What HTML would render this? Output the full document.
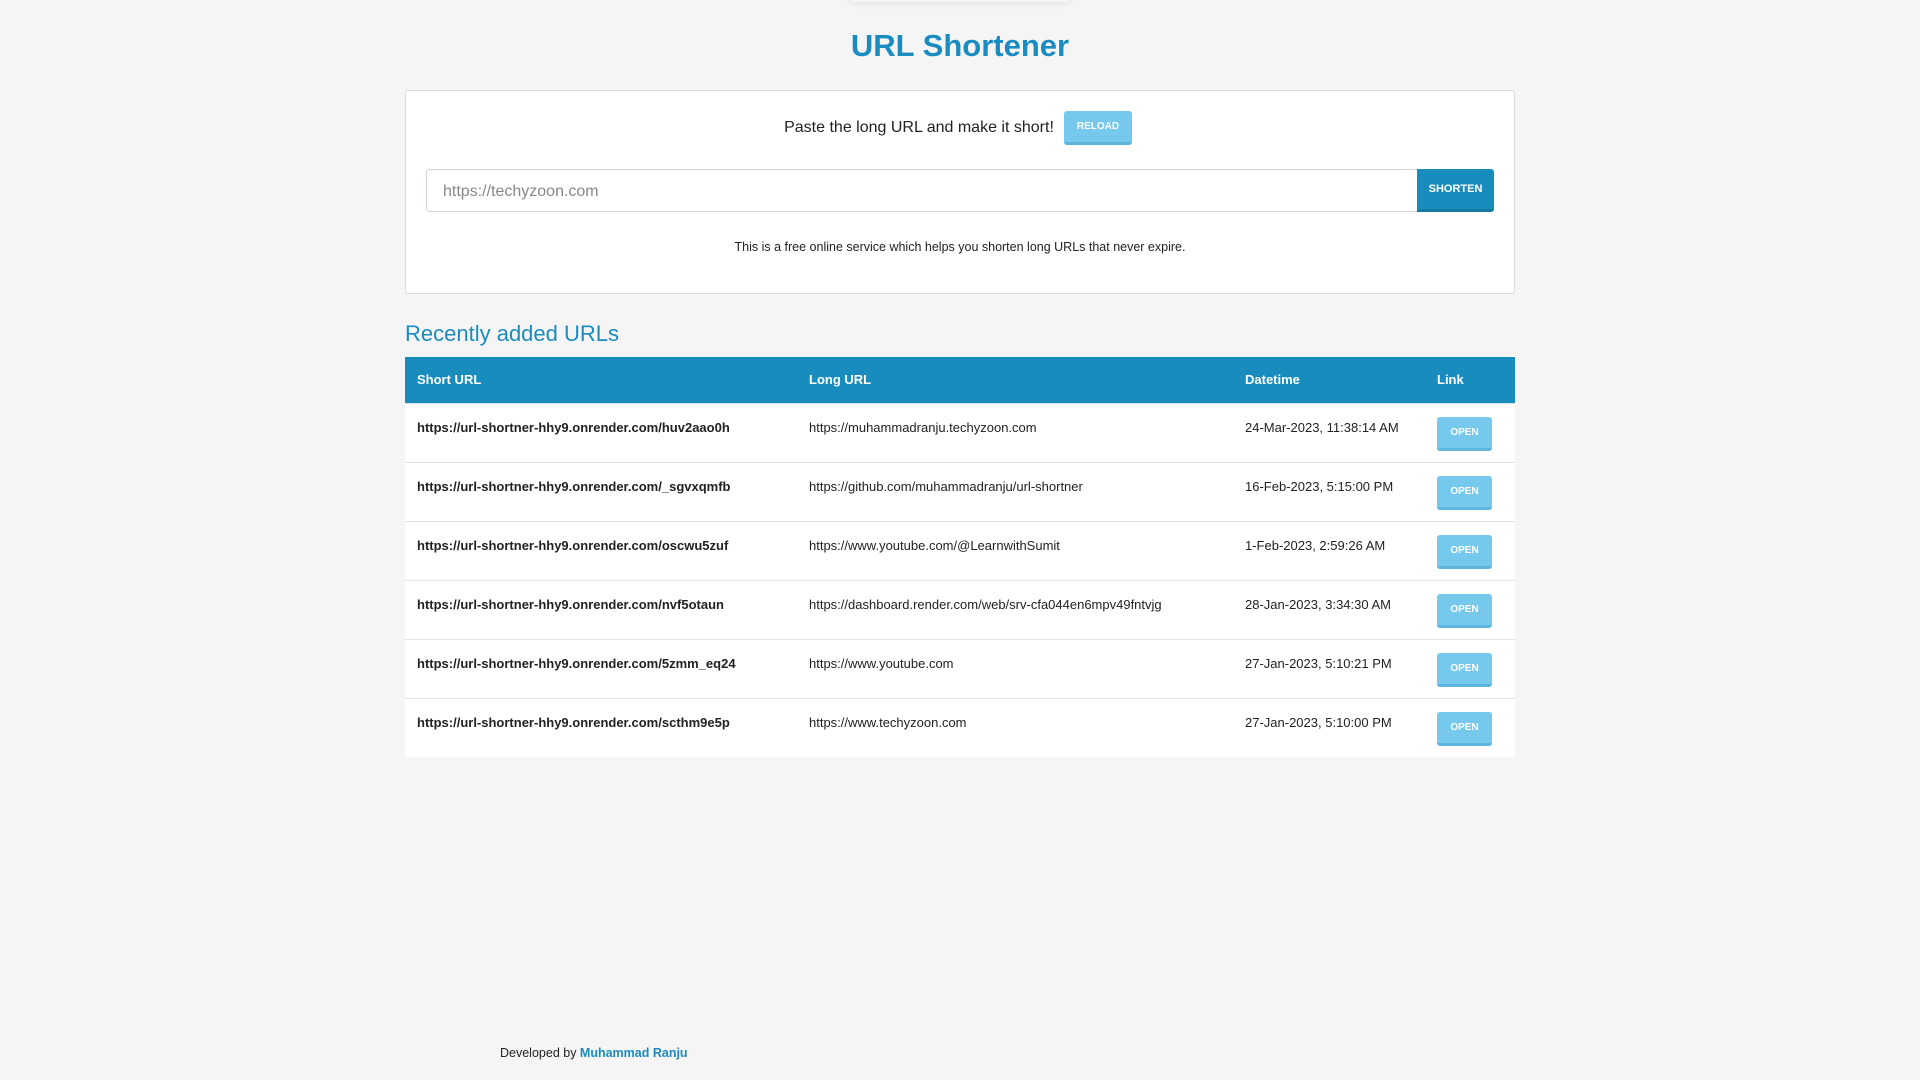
<!DOCTYPE html>
<html><head><meta charset="utf-8"><style>
*{box-sizing:border-box;margin:0;padding:0}
body{width:1920px;height:1080px;background:#f5f5f5;font-family:"Liberation Sans",sans-serif;color:#222;position:relative;overflow:hidden}
.abs{position:absolute}
.topsh{left:850px;top:-6px;width:220px;height:8px;border-radius:6px;box-shadow:0 0 8px rgba(0,0,0,.12);background:#f5f5f5}
h1{position:absolute;left:0;width:1920px;top:28px;text-align:center;font-size:31px;font-weight:bold;color:#1a8cbf}
.card{left:405px;top:90px;width:1110px;height:204px;background:#fff;border:1px solid #dcdcdc;border-radius:3px}
.paste{left:0;width:1920px;top:119px;text-align:center;font-size:16px}
.btn{display:inline-block;color:#fff;font-weight:bold;font-size:10px;text-align:center;border-radius:3px}
.reload{left:1064px;top:111px;width:68px;height:34px;line-height:32px;background:#76c8ec;border-bottom:3px solid #5fb6dc}
.input{left:426px;top:169px;width:992px;height:43px;border:1px solid #cfd4d8;border-radius:3px 0 0 3px;background:#fff;font-size:16px;color:#888;padding-left:16px;line-height:43px}
.shorten{left:1417px;top:169px;width:77px;height:43px;line-height:40px;background:#188dbd;border-bottom:3px solid #137aa5;border-radius:0 3px 3px 0;font-size:11px}
.desc{left:0;width:1920px;top:240px;text-align:center;font-size:12.5px}
.rec{left:405px;top:321px;font-size:22px;color:#1a8cbf}
table{position:absolute;left:405px;top:357px;width:1110px;border-collapse:collapse;background:#fff;font-size:13px}
th{background:#188dbd;color:#fff;text-align:left;height:46px;font-size:13px;padding-left:12px}
td{height:59px;vertical-align:top;padding:16px 0 0 12px;border-top:1px solid #e3e3e3}
td.s{font-weight:bold}
.open{width:55px;height:34px;line-height:31px;background:#76c8ec;border-bottom:3px solid #5fb6dc;margin-top:-3px}
.foot{left:500px;top:1046px;font-size:12.5px}
.foot b{color:#1a8cbf}
</style></head><body>
<div class="abs topsh"></div>
<h1>URL Shortener</h1>
<div class="abs card"></div>
<div class="abs paste">Paste the long URL and make it short!<span style="display:inline-block;width:82px"></span></div>
<div class="abs btn reload">RELOAD</div>
<div class="abs input">https://techyzoon.com</div>
<div class="abs btn shorten">SHORTEN</div>
<div class="abs desc">This is a free online service which helps you shorten long URLs that never expire.</div>
<div class="abs rec">Recently added URLs</div>
<table>
<colgroup><col style="width:392px"><col style="width:436px"><col style="width:192px"><col></colgroup>
<tr><th>Short URL</th><th>Long URL</th><th>Datetime</th><th>Link</th></tr>
<tr><td class="s">https://url-shortner-hhy9.onrender.com/huv2aao0h</td><td>https://muhammadranju.techyzoon.com</td><td>24-Mar-2023, 11:38:14 AM</td><td><div class="btn open">OPEN</div></td></tr>
<tr><td class="s">https://url-shortner-hhy9.onrender.com/_sgvxqmfb</td><td>https://github.com/muhammadranju/url-shortner</td><td>16-Feb-2023, 5:15:00 PM</td><td><div class="btn open">OPEN</div></td></tr>
<tr><td class="s">https://url-shortner-hhy9.onrender.com/oscwu5zuf</td><td>https://www.youtube.com/@LearnwithSumit</td><td>1-Feb-2023, 2:59:26 AM</td><td><div class="btn open">OPEN</div></td></tr>
<tr><td class="s">https://url-shortner-hhy9.onrender.com/nvf5otaun</td><td>https://dashboard.render.com/web/srv-cfa044en6mpv49fntvjg</td><td>28-Jan-2023, 3:34:30 AM</td><td><div class="btn open">OPEN</div></td></tr>
<tr><td class="s">https://url-shortner-hhy9.onrender.com/5zmm_eq24</td><td>https://www.youtube.com</td><td>27-Jan-2023, 5:10:21 PM</td><td><div class="btn open">OPEN</div></td></tr>
<tr><td class="s">https://url-shortner-hhy9.onrender.com/scthm9e5p</td><td>https://www.techyzoon.com</td><td>27-Jan-2023, 5:10:00 PM</td><td><div class="btn open">OPEN</div></td></tr>
</table>
<div class="abs foot">Developed by <b>Muhammad Ranju</b></div>
</body></html>
